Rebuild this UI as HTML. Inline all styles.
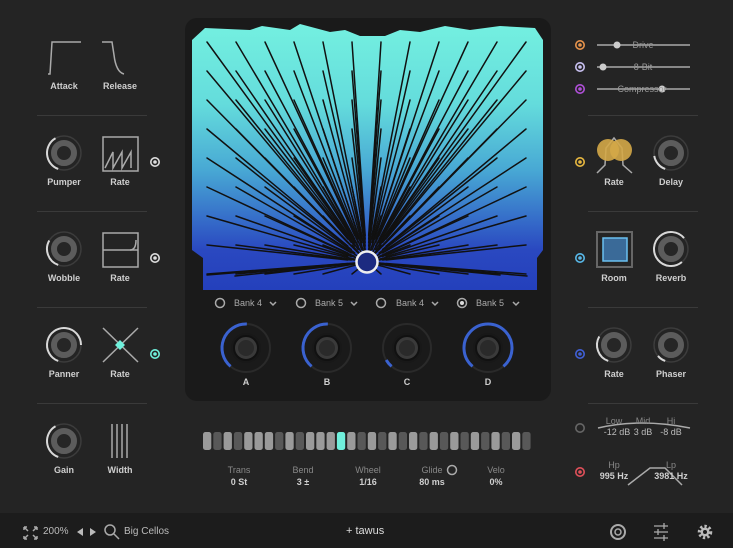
<!DOCTYPE html>
<html><head><meta charset="utf-8"><style>
*{margin:0;padding:0;box-sizing:border-box}
body{width:733px;height:548px;background:#242424;position:relative;overflow:hidden;font-family:"Liberation Sans",sans-serif;color:#cfcfcf}
.t{position:absolute;font-size:9px;font-weight:bold;text-align:center;width:60px;margin-left:-30px}
.sep{position:absolute;height:1px;background:#3a3a3a}
svg{position:absolute;left:0;top:0}
</style></head><body>
<div style="position:absolute;left:185px;top:18px;width:366px;height:383px;background:#1a1a1a;border-radius:12px"></div>
<div style="position:absolute;left:0;top:513px;width:733px;height:35px;background:#1c1c1c"></div>
<div class="sep" style="left:37px;top:115px;width:110px"></div>
<div class="sep" style="left:37px;top:211px;width:110px"></div>
<div class="sep" style="left:37px;top:307px;width:110px"></div>
<div class="sep" style="left:37px;top:403px;width:110px"></div>
<div class="sep" style="left:588px;top:115px;width:110px"></div>
<div class="sep" style="left:588px;top:211px;width:110px"></div>
<div class="sep" style="left:588px;top:307px;width:110px"></div>
<div class="sep" style="left:588px;top:403px;width:110px"></div>
<svg id="s" width="733" height="548" viewBox="0 0 733 548">
<defs>
<linearGradient id="g" x1="0" y1="0" x2="0" y2="1">
<stop offset="0" stop-color="#74f0e0"/><stop offset=".3" stop-color="#64dcdc"/><stop offset=".55" stop-color="#48a8d4"/><stop offset=".75" stop-color="#3468c8"/><stop offset=".85" stop-color="#2a48c0"/><stop offset="1" stop-color="#2440bc"/></linearGradient>
</defs>
<path d="M192 40 L205 28 L250 30 L262 26 L290 30 L300 24 L330 32 L345 30 L360 36 L385 36 L400 30 L420 32 L445 26 L470 30 L500 26 L535 28 L543 40 L543 250 L537 258 L537 290 L203 290 L203 258 L192 250 Z" fill="url(#g)"/>
<g id="ln" stroke="#111" stroke-width="1.5" stroke-linecap="round"></g>
<circle cx="367" cy="262" r="10.5" fill="#1c2a80" stroke="#eee" stroke-width="2.5"/>
<g fill="none" stroke="#aaa" stroke-width="1.5">
<path d="M48 74 L50 74 L52 42 L81 42"/><path d="M102 42 L112 42 L114 55 Q116 72 124 74"/>
<rect x="103" y="137" width="35" height="34"/><path d="M105 168 L113 152 L113 168 L122 152 L122 168 L131 152 L131 168"/>
<rect x="103" y="233" width="35" height="34"/><path d="M103 250 H138"/><path d="M130 250 Q136 250 136 240"/>
<path d="M103 328 L138 362 M138 328 L103 362"/>
<path d="M112 424 V458 M117 424 V458 M122 424 V458 M127 424 V458"/>
<path d="M597 45 H690 M597 67 H690 M597 89 H690"/>
<rect x="597" y="232" width="35" height="35" stroke="#666" stroke-width="2"/>
<path d="M597 173 L605 165 L606 148 L614 138 L622 148 L623 165 L632 173"/>
<path d="M598 428 Q640 418 690 428"/><path d="M628 485 L650 468 L665 468 L682 485"/>
</g>
<rect x="603" y="238" width="24" height="23" fill="#3a6a98" stroke="#6ac0f0" stroke-width="1.5"/>
<circle cx="608" cy="150" r="11" fill="#d4a848" opacity=".9"/><circle cx="621" cy="150" r="11" fill="#d4a848" opacity=".9"/>
<path d="M120 340 l5 5 -5 5 -5 -5z" fill="#70f0dc"/>
<g fill="#ccc"><circle cx="617" cy="45" r="3.5"/><circle cx="603" cy="67" r="3.5"/><circle cx="662" cy="89" r="3.5"/></g>
<g id="kn"></g>
<g id="dots"></g>
<g id="seq"></g>
<g fill="none" stroke="#aaa" stroke-width="1.5">
<circle cx="220" cy="303" r="4.5"/><circle cx="301" cy="303" r="4.5"/><circle cx="381" cy="303" r="4.5"/><circle cx="462" cy="303" r="4.5"/>
<path d="M270 302 l3 3 3 -3 M351 302 l3 3 3 -3 M432 302 l3 3 3 -3 M513 302 l3 3 3 -3"/>
<circle cx="452" cy="470" r="4.5"/>
<path d="M24 527 l4 4 M24 527 h3 M24 527 v3 M37 527 l-4 4 M37 527 h-3 M37 527 v3 M24 539 l4 -4 M24 539 h3 M24 539 v-3 M37 539 l-4 -4 M37 539 h-3 M37 539 v-3"/>
<circle cx="110" cy="530" r="5"/><path d="M114 534 l5 5"/>
<circle cx="618" cy="532" r="7" stroke-width="2"/><circle cx="618" cy="532" r="3"/>
<path d="M654 526 h14 M654 532 h14 M654 538 h14 M664 523 v6 M658 529 v6 M664 535 v6" stroke-width="1.3"/>
</g>
<circle cx="462" cy="303" r="2" fill="#ddd"/>
<path d="M77 532 l6 -4 v8z M90 528 l6 4 -6 4z" fill="#bbb"/>
<g transform="translate(705 532)"><circle r="5.5" fill="none" stroke="#bbb" stroke-width="3.5" stroke-dasharray="2.2 2"/><circle r="4.5" fill="#bbb"/><circle r="2" fill="#1c1c1c"/></g>
</svg>
<div class="t" style="left:64px;top:81px">Attack</div><div class="t" style="left:120px;top:81px">Release</div>
<div class="t" style="left:64px;top:177px">Pumper</div><div class="t" style="left:120px;top:177px">Rate</div>
<div class="t" style="left:64px;top:273px">Wobble</div><div class="t" style="left:120px;top:273px">Rate</div>
<div class="t" style="left:64px;top:369px">Panner</div><div class="t" style="left:120px;top:369px">Rate</div>
<div class="t" style="left:64px;top:465px">Gain</div><div class="t" style="left:120px;top:465px">Width</div>
<div class="t" style="left:614px;top:177px">Rate</div><div class="t" style="left:671px;top:177px">Delay</div>
<div class="t" style="left:614px;top:273px">Room</div><div class="t" style="left:671px;top:273px">Reverb</div>
<div class="t" style="left:614px;top:369px">Rate</div><div class="t" style="left:671px;top:369px">Phaser</div>
<div class="t" style="left:643px;top:40px;color:#999;font-weight:normal">Drive</div>
<div class="t" style="left:643px;top:62px;color:#999;font-weight:normal">8-Bit</div>
<div class="t" style="left:642px;top:84px;color:#999;font-weight:normal">Compressor</div>
<div class="t" style="left:614px;top:416px;color:#888;font-weight:normal">Low</div><div class="t" style="left:643px;top:416px;color:#888;font-weight:normal">Mid</div><div class="t" style="left:671px;top:416px;color:#888;font-weight:normal">Hi</div>
<div class="t" style="left:617px;top:427px;color:#bbb;font-weight:normal">-12 dB</div><div class="t" style="left:643px;top:427px;color:#bbb;font-weight:normal">3 dB</div><div class="t" style="left:671px;top:427px;color:#bbb;font-weight:normal">-8 dB</div>
<div class="t" style="left:614px;top:460px;color:#888;font-weight:normal">Hp</div><div class="t" style="left:671px;top:460px;color:#888;font-weight:normal">Lp</div>
<div class="t" style="left:614px;top:471px">995 Hz</div><div class="t" style="left:671px;top:471px">3981 Hz</div>
<div class="t" style="left:248px;top:298px;color:#aaa;font-weight:normal">Bank 4</div><div class="t" style="left:329px;top:298px;color:#aaa;font-weight:normal">Bank 5</div>
<div class="t" style="left:410px;top:298px;color:#aaa;font-weight:normal">Bank 4</div><div class="t" style="left:490px;top:298px;color:#aaa;font-weight:normal">Bank 5</div>
<div class="t" style="left:246px;top:377px">A</div><div class="t" style="left:327px;top:377px">B</div><div class="t" style="left:407px;top:377px">C</div><div class="t" style="left:488px;top:377px">D</div>
<div class="t" style="left:239px;top:465px;color:#888;font-weight:normal">Trans</div><div class="t" style="left:303px;top:465px;color:#888;font-weight:normal">Bend</div><div class="t" style="left:368px;top:465px;color:#888;font-weight:normal">Wheel</div><div class="t" style="left:432px;top:465px;color:#888;font-weight:normal">Glide</div><div class="t" style="left:496px;top:465px;color:#888;font-weight:normal">Velo</div>
<div class="t" style="left:239px;top:477px">0 St</div><div class="t" style="left:303px;top:477px">3 ±</div><div class="t" style="left:368px;top:477px">1/16</div><div class="t" style="left:432px;top:477px">80 ms</div><div class="t" style="left:496px;top:477px">0%</div>
<div style="position:absolute;left:43px;top:526px;font-size:10px;color:#bbb">200%</div>
<div style="position:absolute;left:124px;top:526px;font-size:10px;color:#bbb">Big Cellos</div>
<div style="position:absolute;left:346px;top:525px;font-size:11px;color:#ddd">+ tawus</div>
<script>
var NS="http://www.w3.org/2000/svg";
function el(p,t,a){var e=document.createElementNS(NS,t);for(var k in a)e.setAttribute(k,a[k]);document.getElementById(p).appendChild(e);return e}
var cx=367,cy=262;
for(var i=0;i<12;i++)for(var j=0;j<9;j++){var x=207+i*29,y=42+j*29;if(y>cy+15)continue;
var dx=x-cx,dy=y-cy;var sx=cx+dx*0.12,sy=cy+dy*0.12;el("ln","line",{x1:sx,y1:sy,x2:x,y2:y});}
[[207,275],[235,276],[500,275],[527,276]].forEach(function(p){el("ln","line",{x1:cx,y1:cy,x2:p[0],y2:p[1]})});
function arc(r,a0,a1){var p=function(a){a=a*Math.PI/180;return [r*Math.sin(a),-r*Math.cos(a)]};var s=p(a0),e=p(a1);return "M"+s[0]+" "+s[1]+" A"+r+" "+r+" 0 "+((a1-a0)>180?1:0)+" 1 "+e[0]+" "+e[1]}
function knob(x,y,a0,a1){var g=el("kn","g",{transform:"translate("+x+" "+y+")"});
g.innerHTML='<circle r="17" fill="none" stroke="#3c3c3c" stroke-width="1.5"/><path d="'+arc(17,a0,a1)+'" fill="none" stroke="#d8d8d8" stroke-width="2"/><circle r="10" fill="#262626" stroke="#5c5c5c" stroke-width="6"/>';}
knob(64,153,200,330);knob(64,249,200,300);knob(64,345,200,450);knob(64,441,200,330);
knob(671,153,200,260);knob(671,249,140,410);knob(614,345,200,300);knob(671,345,200,230);
function bk(x,y,a1){var g=el("kn","g",{transform:"translate("+x+" "+y+")"});
g.innerHTML='<circle r="24" fill="none" stroke="#2a2a2a" stroke-width="2"/><path d="'+arc(24,220,a1)+'" fill="none" stroke="#3a62d0" stroke-width="3"/><circle r="15" fill="#181818"/><circle r="12" fill="#3a3a3a" stroke="#111" stroke-width="2"/><circle r="8" fill="#2a2a2a"/>';}
bk(246,348,362);bk(327,348,362);bk(407,348,240);bk(488,348,500);
[[155,162,"#ddd"],[155,258,"#ddd"],[155,354,"#70f0dc"],[580,45,"#e8944c"],[580,67,"#c8c0f0"],[580,89,"#b050d8"],[580,162,"#e8b840"],[580,258,"#58b8e8"],[580,354,"#4060d8"],[580,428,"#666"],[580,472,"#e0505a"]].forEach(function(d){
el("dots","circle",{cx:d[0],cy:d[1],r:4.2,fill:"none",stroke:d[2],"stroke-width":1.6});if(d[2]!="#666")el("dots","circle",{cx:d[0],cy:d[1],r:1.8,fill:d[2]});});
for(var k=0;k<32;k++){var x=203+k*10.3;var c=(k%2==0)?"#9a9a9a":((k==5||k==11)?"#9a9a9a":"#585858");if(k==13)c="#70f0dc";
el("seq","rect",{x:x,y:432,width:8.3,height:18,rx:2.5,fill:c});}
</script>
</body></html>
